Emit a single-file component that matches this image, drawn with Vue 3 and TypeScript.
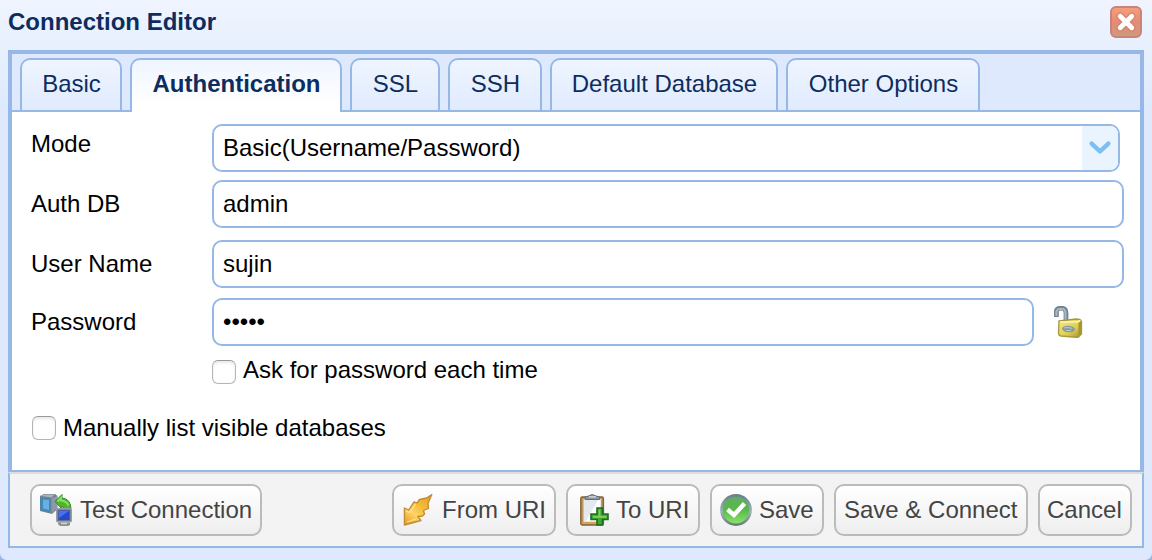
<script setup lang="ts">
import { ref } from 'vue'

interface Tab {
  label: string
  width: number
}

const tabs: Tab[] = [
  { label: 'Basic', width: 102 },
  { label: 'Authentication', width: 212 },
  { label: 'SSL', width: 90 },
  { label: 'SSH', width: 94 },
  { label: 'Default Database', width: 228 },
  { label: 'Other Options', width: 194 },
]
const active = ref('Authentication')
const askEachTime = ref(false)
const manualList = ref(false)
</script>

<template>
  <div class="window">
    <header class="title-bar">
      <h1 class="title">Connection Editor</h1>
      <svg class="close" width="32" height="32" viewBox="0 0 32 32">
        <defs>
          <linearGradient id="closeFill" x1="0" y1="0" x2="0" y2="1">
            <stop offset="0" stop-color="#f2a17c" />
            <stop offset="0.5" stop-color="#e58b76" />
            <stop offset="1" stop-color="#cc9a7c" />
          </linearGradient>
        </defs>
        <rect x="1" y="1" width="30" height="30" rx="5" fill="url(#closeFill)" stroke="#c98378" stroke-width="2" />
        <path d="M10.2 10.2L21.8 21.8M21.8 10.2L10.2 21.8" stroke="#d0705f" stroke-opacity=".45" stroke-width="7.5" stroke-linecap="round" />
        <path d="M10.2 10.2L21.8 21.8M21.8 10.2L10.2 21.8" stroke="#fff" stroke-width="4.8" stroke-linecap="round" />
      </svg>
    </header>

    <main class="panel">
      <nav class="tabs">
        <div
          v-for="t in tabs"
          :key="t.label"
          class="tab"
          :class="{ active: t.label === active }"
          :style="{ width: t.width + 'px' }"
          @click="active = t.label"
        >{{ t.label }}</div>
      </nav>

      <section class="form">
        <div class="row mode">
          <span class="label raised">Mode</span>
          <div class="field combo">
            <span>Basic(Username/Password)</span>
            <span class="arrow">
              <svg width="36" height="44" viewBox="0 0 36 44">
                <path d="M9.6 17.6L18 25.4L26.4 17.6" fill="none" stroke="#7cbff2" stroke-width="4.4" stroke-linecap="round" stroke-linejoin="round" />
              </svg>
            </span>
          </div>
        </div>
        <div class="row auth">
          <span class="label">Auth DB</span>
          <div class="field">admin</div>
        </div>
        <div class="row user">
          <span class="label">User Name</span>
          <div class="field">sujin</div>
        </div>
        <div class="row">
          <span class="label">Password</span>
          <div class="field password">•••••</div>
          <svg class="lock" width="32" height="32" viewBox="0 0 32 32">
            <defs>
              <linearGradient id="lockBody" x1="0" y1="0" x2="1" y2="1">
                <stop offset="0" stop-color="#f3ea8a" />
                <stop offset="0.6" stop-color="#dfcf4e" />
                <stop offset="1" stop-color="#9b8c2c" />
              </linearGradient>
            </defs>
            <path d="M2.4 11V5Q3 2.2 7 2.2Q12 2.2 12 7V15" fill="none" stroke="#74838f" stroke-width="4.8" />
            <path d="M2.4 10V6Q3 2.8 7 2.8Q11.5 2.8 11.5 7V14" fill="none" stroke="#a9b8c4" stroke-width="2" />
            <path d="M5 15L22 13Q27 13 27.5 15.5V28L24 31.5L7 30Q4.5 29.5 4.5 27Z" fill="url(#lockBody)" stroke="#a5983d" stroke-width="1.3" />
            <path d="M6 16L23 16L26.5 14.5" fill="none" stroke="#faf6b5" stroke-width="1.5" />
            <path d="M24.5 17V30L27 27V15Z" fill="#a4962f" />
            <ellipse cx="14.5" cy="23" rx="6.5" ry="3.3" fill="#899b9e" transform="rotate(5 14.5 23)" />
            <path d="M10 22Q14 20.8 18 22.5M12 24.5H17" fill="none" stroke="#b9c8c8" stroke-width="1.2" />
          </svg>
        </div>
        <label class="check ask">
          <input v-model="askEachTime" type="checkbox" /><span>Ask for password each time</span>
        </label>
        <label class="check manual">
          <input v-model="manualList" type="checkbox" /><span>Manually list visible databases</span>
        </label>
      </section>
    </main>

    <footer class="buttons">
      <button class="btn test">
        <svg width="32" height="32" viewBox="0 0 32 32">
          <path d="M0 2L4 0H15L17.5 2V15L12 20L0 17Z" fill="#74808c" />
          <path d="M1 2L4 .5H15L11.5 3.5Z" fill="#aab4bd" />
          <path d="M11.5 4L17 2V14.5L11.5 19.5Z" fill="#8c99a8" />
          <path d="M0 3.5L10.5 4.5V18.5L0 16Z" fill="#4787b2" />
          <path d="M3 5.5L9 6V16L3 14.5Z" fill="#67b1e2" />
          <path d="M15 7.5L22 .5V4Q31 5 31 15.5H23.5Q24.5 12 22 12V15Z" fill="#4fb62c" stroke="#2e8a27" stroke-width="1" stroke-linejoin="round" />
          <path d="M17.5 7.5L21 4V6.5Q26.5 7 28.5 11.5" fill="none" stroke="#88df65" stroke-width="2" />
          <rect x="16.7" y="14.7" width="14.6" height="13" rx="1" fill="#6c7690" stroke="#999ea8" stroke-width="1.4" />
          <rect x="18.5" y="16.5" width="11" height="9.5" fill="#2449d0" />
          <path d="M19 17H29L19 24Z" fill="#4871ea" />
          <path d="M18 28.5H30V31L28 32H20L18 30Z" fill="#8c8f92" />
          <path d="M21 29.5H27" stroke="#cfd0d2" stroke-width="1.5" />
        </svg>
        Test Connection
      </button>
      <button class="btn from">
        <svg width="32" height="32" viewBox="0 0 32 32">
          <defs>
            <linearGradient id="boltFill" x1="1" y1="0" x2="0.2" y2="1">
              <stop offset="0" stop-color="#dfa029" />
              <stop offset="0.45" stop-color="#f5bd38" />
              <stop offset="0.7" stop-color="#fdd566" />
              <stop offset="1" stop-color="#eba72a" />
            </linearGradient>
          </defs>
          <path d="M29.8 .6L24.5 4L17.5 5.5L15 9L12 7.8L6.8 16L2.4 14V31L19 26.5L15.8 22.5L20.5 22L22.5 20L21.5 16.5L26.5 14.5L26 9.5Z" fill="url(#boltFill)" stroke="#c28a36" stroke-width="1.3" stroke-linejoin="round" />
          <path d="M4 17L7.5 18.5L13.5 10M5 28L14 25" fill="none" stroke="#ffe391" stroke-width="1.3" />
        </svg>
        From URI
      </button>
      <button class="btn to">
        <svg width="32" height="32" viewBox="0 0 32 32">
          <rect x="2.8" y="3" width="22.6" height="28" rx="1.5" fill="#c1985b" stroke="#866139" stroke-width="1.4" />
          <path d="M5.5 5H23V28H5.5Z" fill="#e3e9ef" />
          <path d="M20 6H22V27H8Z" fill="#fff" />
          <path d="M4 29.2H23" stroke="#d9a861" stroke-width="1.4" />
          <path d="M7 5.5V3L10.5 2Q14 -1 18 2L21.5 3V5.5Z" fill="#8f9aa2" stroke="#626d75" />
          <path d="M11 2.8H18" stroke="#cfd7dc" stroke-width="1.4" />
          <path d="M19 14H24.5V20H30V25.5H24.5V31H19V25.5H13V20H19Z" fill="#43a72e" stroke="#1c6d20" stroke-width="1.6" />
          <path d="M21.5 15.5V22.8H15M22 22.8H28.5" fill="none" stroke="#7fd45f" stroke-width="1.8" />
        </svg>
        To URI
      </button>
      <button class="btn save">
        <svg width="32" height="32" viewBox="0 0 32 32">
          <defs>
            <linearGradient id="okFill" x1="0" y1="0" x2="0" y2="1">
              <stop offset="0" stop-color="#62ab62" />
              <stop offset="0.5" stop-color="#58ba49" />
              <stop offset="1" stop-color="#8ee66e" />
            </linearGradient>
            <linearGradient id="okRing" x1="0" y1="0" x2="0" y2="1">
              <stop offset="0" stop-color="#68818f" />
              <stop offset="0.55" stop-color="#a1b3c0" />
              <stop offset="1" stop-color="#698078" />
            </linearGradient>
          </defs>
          <circle cx="16" cy="16" r="14.6" fill="url(#okFill)" stroke="url(#okRing)" stroke-width="2.6" />
          <path d="M7.5 15.5L14 21L24.5 9.5" fill="none" stroke="#fff" stroke-width="4.4" />
        </svg>
        Save
      </button>
      <button class="btn connect">Save &amp; Connect</button>
      <button class="btn cancel">Cancel</button>
    </footer>
  </div>
</template>

<style>
body {
  margin: 0;
  overflow: hidden;
  background: #95b8e7;
}
</style>

<style scoped>
.window {
  box-sizing: border-box;
  width: 1152px;
  height: 560px;
  padding: 0 8px;
  overflow: hidden;
  font: 24px/28px 'Liberation Sans', Arial, sans-serif;
  color: #000;
  background: linear-gradient(to bottom, #eff4ff 0, #e7f0fe 9%, #dfe9fd 20%);
  border-radius: 0 0 7px 7px;
}
.title-bar {
  display: flex;
  justify-content: space-between;
  height: 50px;
}
.title {
  margin: 8px 0 0;
  font-size: 24px;
  line-height: 28px;
  font-weight: bold;
  color: #0e2d5f;
}
.close {
  margin: 6px 2px 0 0;
}
.panel {
  box-sizing: border-box;
  height: 422px;
  border: 4px solid #95b8e7;
  border-bottom-width: 2px;
  background: #fff;
}
.tabs {
  box-sizing: border-box;
  display: flex;
  gap: 8px;
  height: 58px;
  padding: 4px 8px 0;
  background: #dfe9fd;
  border-bottom: 2px solid #95b8e7;
}
.tab {
  box-sizing: border-box;
  height: 52px;
  padding-left: 1px;
  line-height: 48px;
  text-align: center;
  white-space: nowrap;
  color: #0e2d5f;
  border: 2px solid #95b8e7;
  border-bottom: 0;
  border-radius: 10px 10px 0 0;
  background: linear-gradient(to bottom, #eff5ff, #e0ebfe);
}
.tab.active {
  height: 54px;
  font-weight: bold;
  background: linear-gradient(to bottom, #eff5ff, #fff 85%);
}
.form {
  padding: 12px 0 0 19px;
}
.row {
  display: flex;
  align-items: center;
  height: 48px;
}
.row.mode {
  margin-bottom: 8px;
}
.row.auth {
  margin-bottom: 12px;
}
.row.user {
  margin-bottom: 10px;
}
.label {
  width: 181px;
}
.label.raised {
  margin-bottom: 8px;
}
.field {
  box-sizing: border-box;
  width: 912px;
  height: 48px;
  padding-left: 9px;
  line-height: 44px;
  border: 2px solid #95b8e7;
  border-radius: 10px;
  background: #fff;
}
.combo {
  display: flex;
  justify-content: space-between;
  width: 908px;
  overflow: hidden;
}
.arrow {
  width: 36px;
  height: 44px;
  background: #eaf4ff;
}
.arrow svg {
  display: block;
}
.password {
  width: 822px;
}
.lock {
  margin-left: 20px;
}
.check {
  display: flex;
  align-items: center;
  height: 24px;
}
.check input {
  appearance: none;
  box-sizing: border-box;
  width: 24px;
  height: 24px;
  margin: 0;
  border: 1.5px solid #b4b4b4;
  border-top-color: #999;
  border-radius: 6px;
  background: #fff;
  box-shadow: inset 0 2px 3px #e9e9e9;
}
.check span {
  margin-left: 7px;
}
.ask {
  margin: 14px 0 0 181px;
}
.ask span {
  margin-bottom: 4px;
}
.manual {
  margin: 32px 0 0 1px;
}
.buttons {
  box-sizing: border-box;
  display: flex;
  height: 76px;
  padding: 10px 10px 0 20px;
  gap: 10px;
  border: 2px solid #95b8e7;
  border-top-color: #ddd;
  background: #f3f3f3;
}
.btn {
  box-sizing: border-box;
  display: flex;
  align-items: center;
  height: 52px;
  margin: 0;
  padding: 0 0 0 8px;
  font: inherit;
  white-space: nowrap;
  color: #444;
  border: 2px solid #bbb;
  border-radius: 10px;
  background: linear-gradient(to bottom, #fff, #eee);
}
.btn svg {
  flex: none;
  margin-right: 8px;
}
.test {
  width: 232px;
  margin-right: 120px;
}
.from {
  width: 164px;
}
.to {
  width: 134px;
  padding-left: 10px;
}
.to svg {
  margin-right: 6px;
}
.save {
  width: 114px;
}
.save svg {
  margin-right: 7px;
}
.connect {
  width: 194px;
}
.cancel {
  width: 94px;
  padding-left: 7px;
}
</style>
